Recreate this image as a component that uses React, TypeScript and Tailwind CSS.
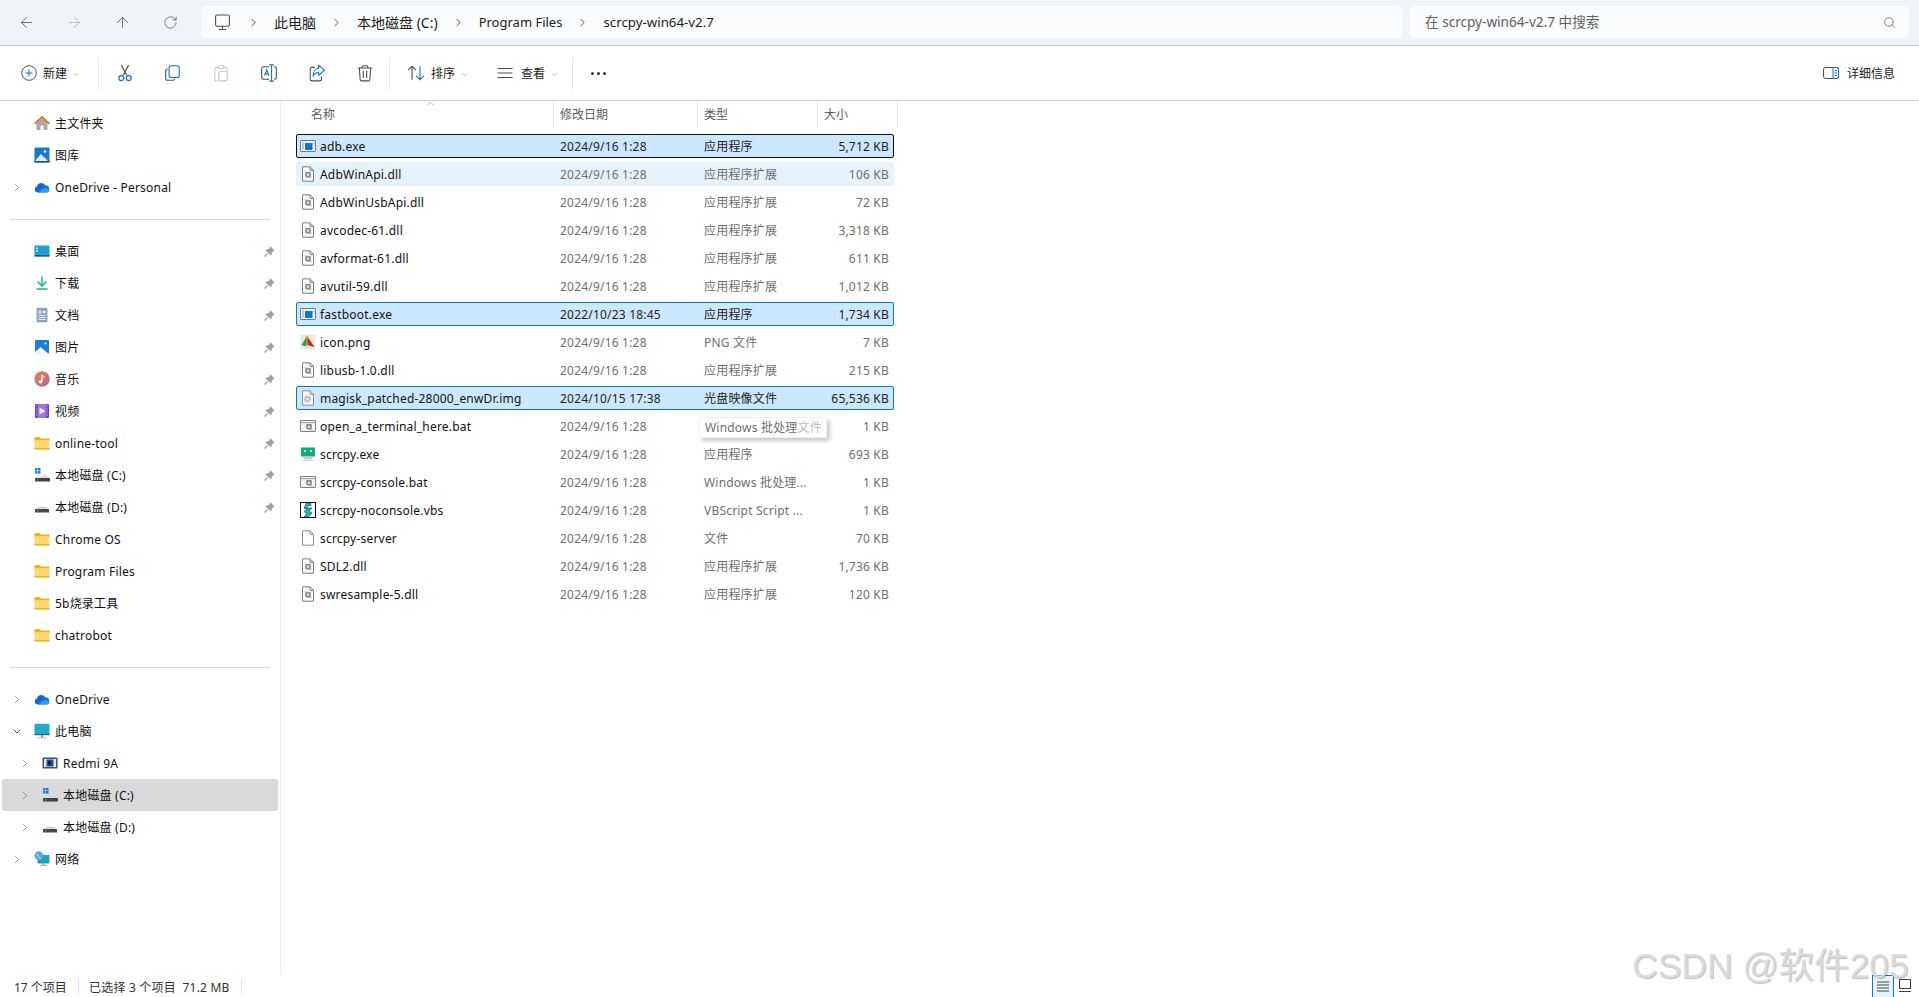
import React from "react";
import { ArrowLeft, ArrowRight, ArrowUp, RotateCw, ChevronRight, ChevronDown, ChevronUp, Search } from "lucide-react";

const Svg = ({ children, size = 16, className = "" }: { children: React.ReactNode; size?: number; className?: string }) => (
  <svg width={size} height={size} viewBox="0 0 16 16" fill="none" className={`shrink-0 ${className}`}>{children}</svg>
);

const Home = () => (
  <Svg>
    <path d="M2.500 7.500v7.500h4V10.500h3V15h4V7.500L8 3z" fill="#a8a8a8" />
    <path d="M0 8.300 8 .8l8 7.500-1.100 1.100L8 3.100 1.100 9.400z" fill="#dd7412" />
  </Svg>
);
const Gallery = () => (
  <Svg>
    <rect x="0.500" y="0.500" width="15" height="15" rx="1" fill="#1a78c8" />
    <rect x="0.500" y="13" width="15" height="2.500" fill="#0f5a9c" />
    <path d="M1 14 7 7l7 7z" fill="#dfeaf4" />
    <circle cx="11" cy="4.500" r="1.200" fill="#fff" />
  </Svg>
);
const Cloud = () => (
  <Svg>
    <path d="M3.500 13.500A3 3 0 0 1 3 7.600 4.400 4.400 0 0 1 11.400 6.600 3.500 3.500 0 0 1 12.500 13.500z" fill="#0f6cc8" />
    <path d="M4 13.500 9 9.300l3-.6 3.600 2.600a2.600 2.600 0 0 1-2.600 2.200z" fill="#2ba0ea" />
  </Svg>
);
const Desktop = () => (
  <Svg>
    <rect x="0.500" y="2.500" width="15" height="11" rx="1" fill="#1c9fd0" />
    <rect x="0.500" y="12" width="15" height="1.500" fill="#0d5f96" />
    <rect x="2" y="4.500" width="2" height="1.500" fill="#e8f6fc" />
    <rect x="2" y="7" width="2" height="1.500" fill="#e8f6fc" />
  </Svg>
);
const Download = () => (
  <Svg>
    <path d="M8 1.500v9M3.600 6.600 8 11l4.400-4.400" stroke="#2fb58f" strokeWidth="1.600" />
    <rect x="2.500" y="13.200" width="11" height="1.600" fill="#2fb58f" />
  </Svg>
);
const Docs = () => (
  <Svg>
    <rect x="2.500" y="0.800" width="11" height="14.400" rx="1" fill="#8ea6c3" />
    <path d="M4.500 4h3M4.500 6h3" stroke="#fff" />
    <path d="M9 4h2.500v2H9z" fill="#fff" />
    <path d="M4.500 8.500h7M4.500 10.500h7M4.500 12.500h7" stroke="#e4ebf3" />
  </Svg>
);
const Pictures = () => (
  <Svg>
    <rect x="1" y="1" width="14" height="14" rx="1" fill="#1a7fd4" />
    <path d="M1 15V13l5.500-5 8.500 7z" fill="#e9f3fb" />
    <circle cx="11.500" cy="4.500" r="1" fill="#fff" />
  </Svg>
);
const Music = () => (
  <Svg>
    <defs>
      <linearGradient id="mg" x1="0" y1="0" x2="1" y2="1">
        <stop offset="0" stopColor="#ea8a3c" />
        <stop offset="1" stopColor="#b25fa8" />
      </linearGradient>
    </defs>
    <circle cx="8" cy="8" r="7.700" fill="url(#mg)" />
    <path d="M8 4v6.500" stroke="#fff" strokeWidth="1.300" />
    <path d="M8 4c1 1.500 2.500 1 2.500 2.500" stroke="#fff" />
    <circle cx="6.500" cy="10.800" r="1.700" fill="#fff" />
  </Svg>
);
const Video = () => (
  <Svg>
    <rect x="1" y="1" width="14" height="14" rx="1" fill="#6d3fc4" />
    <rect x="3.500" y="1" width="9" height="14" fill="#9c75e4" />
    <path d="M5.500 4.500v7l6-3.500z" fill="#f3eefc" />
    <path d="M2 3h.8M2 6h.8M2 9h.8M2 12h.8M13.200 3h.8M13.200 6h.8M13.200 9h.8M13.200 12h.8" stroke="#d8c8f4" strokeWidth="1.200" />
  </Svg>
);
const Folder = () => (
  <Svg>
    <path d="M0.500 3a1 1 0 0 1 1-1h4l1.500 1.500h7.500a1 1 0 0 1 1 1V6H.5z" fill="#eeb01b" />
    <path d="M0.500 5h15v8.500a1 1 0 0 1-1 1h-13a1 1 0 0 1-1-1z" fill="#fbd96e" />
    <path d="M0.500 13h15v.5a1 1 0 0 1-1 1h-13a1 1 0 0 1-1-1z" fill="#eeb01b" />
  </Svg>
);
const DriveC = () => (
  <Svg>
    <path d="M1 1h2.500v2.500H1zM4 1h2.500v2.500H4zM1 4h2.500v2.500H1zM4 4h2.500v2.500H4z" fill="#0a84dc" />
    <path d="M3 9.500h6.500l1.500-3 4 5H1z" fill="#d8dde2" />
    <rect x="1" y="11" width="15" height="3.500" rx=".5" fill="#3f4347" />
    <rect x="3" y="12.300" width="1.500" height="1" fill="#4ce06a" />
  </Svg>
);
const DriveD = () => (
  <Svg>
    <path d="M1.500 10.500C2.500 6.500 13.500 6.500 14.500 10.500z" fill="#d5d8dc" />
    <rect x="1" y="10" width="14" height="3.500" rx=".5" fill="#43474b" />
    <rect x="3" y="11.300" width="1.500" height="1" fill="#4ce06a" />
  </Svg>
);
const Pc = () => (
  <Svg>
    <rect x="0.500" y="0.800" width="15" height="11.200" rx="1" fill="#23aac7" />
    <rect x="0.500" y="11" width="15" height="1.200" fill="#0d7089" />
    <rect x="7" y="12" width="2" height="2.500" fill="#8a9aa3" />
    <rect x="4" y="14.300" width="8" height="1" fill="#aab6bc" />
  </Svg>
);
const Phone = () => (
  <Svg>
    <rect x="0.500" y="2.500" width="15" height="11" rx="1" fill="#4a4f55" />
    <rect x="2" y="4" width="12" height="8" fill="#e4e7ea" />
    <rect x="4.500" y="4.500" width="7" height="7" fill="#1d4fb0" />
    <rect x="6" y="6" width="3" height="4" fill="#0c1e4a" />
  </Svg>
);
const Network = () => (
  <Svg>
    <rect x="3.500" y="4" width="12" height="8.500" rx=".8" fill="#22a3c4" />
    <rect x="8.500" y="12.500" width="2" height="1.500" fill="#8a9aa3" />
    <rect x="6" y="14" width="7" height="1" fill="#aab6bc" />
    <circle cx="4.800" cy="4.500" r="4.300" fill="#5aa6e0" />
    <path d="M2 3c1.500.5 2 1 2.500 2.500S6 7 7 7.500" stroke="#cfe8f8" />
  </Svg>
);

const Pin = () => (
  <svg width="11" height="11" viewBox="0 0 11 11" className="shrink-0">
    <path d="M6.500.5 10.500 4.500 9.500 5 7.800 6.500 7.500 9 6.800 9.500 1.500 4.200 2 3.500 4.500 3.200 6 1.500z" fill="#98a0a8" />
    <path d="M3.500 7.500.5 10.500" stroke="#98a0a8" strokeWidth="1.200" />
  </svg>
);

const ExeIcon = () => (
  <Svg>
    <rect x="0.500" y="2.500" width="15" height="11" rx=".6" fill="#f4f6f8" stroke="#6f7a84" />
    <rect x="5" y="5" width="7.500" height="7" fill="#0b78d0" />
    <path d="M2 5h2M2 7h2M2 9h2M2 11h2M13 5h1.500" stroke="#8a96a2" />
  </Svg>
);
const Gear = ({ x = 8, y = 8.700 }: { x?: number; y?: number }) => (
  <g>
    <circle cx={x} cy={y} r="3" fill="#8a929a" />
    <circle cx={x} cy={y} r="1.100" fill="#f2f3f4" />
    <path d={`M${x - 3.300} ${y - 3.300}l1.800 1.800M${x + 3.300} ${y + 3.300}l-1.800-1.800M${x + 3} ${y - 3}l-1.300 1.300`} stroke="#7f8891" />
  </g>
);
const DllIcon = () => (
  <Svg>
    <path d="M2.500.8h7.500l3.500 3.500v10.900h-11z" fill="#fafafa" stroke="#7c7f83" />
    <path d="M10 .8v3.500h3.500" stroke="#7c7f83" />
    <Gear />
  </Svg>
);
const PngIcon = () => (
  <Svg>
    <rect x="0.500" y="0.500" width="15" height="15" rx="1.500" fill="#e8e8e8" />
    <path d="M7 2 1.500 11l5 1.500z" fill="#2f9e35" />
    <path d="M7 2 14.500 13l-7-2z" fill="#c9261a" />
    <path d="M5.500 3 7.500 2 9 4.500 6 6z" fill="#ee8a1c" />
  </Svg>
);
const ImgIcon = () => (
  <Svg>
    <path d="M2.500.8h7.500l3.500 3.500v10.900h-11z" fill="#fafafa" stroke="#8c8f93" />
    <path d="M10 .8v3.500h3.500" stroke="#8c8f93" />
    <circle cx="7.500" cy="9" r="3.500" fill="#c4c7ca" />
    <circle cx="7.500" cy="9" r="1" fill="#eef0f2" />
  </Svg>
);
const BatIcon = () => (
  <Svg>
    <rect x="0.500" y="2.500" width="15" height="11" rx=".5" fill="#f4f4f4" stroke="#7c7f83" />
    <path d="M1 4.500h14" stroke="#a0a3a6" />
    <Gear x={9} y={8.800} />
  </Svg>
);
const ScrcpyIcon = () => (
  <Svg>
    <rect x="1" y="1.500" width="14" height="9" fill="#13a97a" />
    <circle cx="5" cy="5" r=".9" fill="#fff" />
    <circle cx="11" cy="5" r=".9" fill="#fff" />
    <path d="M4 10.500h8v3H4z" fill="#c8cdd0" />
    <path d="M2 14h12v1H2z" fill="#dde0e2" />
  </Svg>
);
const VbsIcon = () => (
  <Svg>
    <rect x="0.500" y="0.500" width="15" height="15" fill="#fff" stroke="#111" />
    <path d="M6 1.500h5v2H8L7 6h5L9 9l3 2-3 3.500H4l3-3-3-2 3-3H4z" fill="#14b4c4" stroke="#0a2840" strokeWidth=".5" />
  </Svg>
);
const BlankIcon = () => (
  <Svg>
    <path d="M2.500.8h7.500l3.500 3.500v10.900h-11z" fill="#fdfdfd" stroke="#8c8f93" />
    <path d="M10 .8v3.500h3.500" stroke="#8c8f93" />
  </Svg>
);

const CutI = () => (
  <Svg size={18}>
    <path d="M4.800 1 9.500 10M11.200 1 6.500 10" stroke="#4c4c4c" />
    <circle cx="4.700" cy="12.500" r="2.200" stroke="#0a74c9" strokeWidth="1.100" />
    <circle cx="11.300" cy="12.500" r="2.200" stroke="#0a74c9" strokeWidth="1.100" />
  </Svg>
);
const CopyI = () => (
  <Svg size={18}>
    <path d="M3.500 4.500h-.5a1.500 1.500 0 0 0-1.500 1.500v7a1.500 1.500 0 0 0 1.500 1.500h5A1.500 1.500 0 0 0 9.500 13.500" stroke="#4c4c4c" strokeWidth=".95" />
    <rect x="4.500" y="1.500" width="9" height="10.500" rx="1.800" stroke="#0a74c9" strokeWidth=".95" />
  </Svg>
);
const PasteI = () => (
  <Svg size={18}>
    <path d="M5 3H4a1.500 1.500 0 0 0-1.500 1.500v9A1.500 1.500 0 0 0 4 15h1M11 3h1a1.500 1.500 0 0 1 1.500 1.500V6" stroke="#c8c8c8" strokeWidth=".95" />
    <rect x="5.500" y="1.500" width="5" height="2.500" rx=".8" stroke="#c8c8c8" strokeWidth=".95" />
    <rect x="6" y="6.500" width="7.500" height="8.500" rx="1.500" stroke="#a9cdea" strokeWidth=".95" />
  </Svg>
);
const RenameI = () => (
  <Svg size={18}>
    <path d="M8 2.500H3a1.500 1.500 0 0 0-1.500 1.500v8A1.500 1.500 0 0 0 3 13.500h5M12.500 2.500h.5A1.500 1.500 0 0 1 14.500 4v8a1.500 1.500 0 0 1-1.500 1.500h-.5" stroke="#4c4c4c" strokeWidth=".95" />
    <path d="M8.300.8h4M8.300 15.200h4M10.300.8v14.400" stroke="#0a74c9" strokeWidth=".95" />
    <path d="M4 10.500 6 5l2 5.500M4.700 8.800h2.600" stroke="#0a74c9" strokeWidth=".95" />
  </Svg>
);
const ShareI = () => (
  <Svg size={18}>
    <path d="M6 3H3.500A1.500 1.500 0 0 0 2 4.500v9A1.500 1.500 0 0 0 3.500 15h7a1.500 1.500 0 0 0 1.500-1.500V11" stroke="#4c4c4c" strokeWidth=".95" />
    <path d="M9.500 1 14.700 5.500 9.500 10V7.500C7 7.500 5.500 8.500 4.500 11 4.500 7 6.500 4 9.500 3.800z" stroke="#0a74c9" strokeWidth=".95" strokeLinejoin="round" />
  </Svg>
);
const TrashI = () => (
  <Svg size={18}>
    <path d="M1.500 3.500h13M5.500 3.500v-1a1 1 0 0 1 1-1h3a1 1 0 0 1 1 1v1M3 3.500l.7 10.500a1.200 1.200 0 0 0 1.200 1h6.200a1.200 1.200 0 0 0 1.200-1L13 3.500M6.500 6v6.500M9.500 6v6.500" stroke="#4c4c4c" strokeWidth=".95" />
  </Svg>
);
const SortI = () => (
  <Svg size={18}>
    <path d="M4.500 14V2M1 5.500 4.500 2 8 5.500" stroke="#4c4c4c" strokeWidth=".95" />
    <path d="M11.500 2v12M8 10.500 11.500 14 15 10.500" stroke="#0a74c9" strokeWidth=".95" />
  </Svg>
);
const ViewI = () => (
  <Svg size={16}>
    <path d="M.5 3.500h15M.5 8h15M.5 12.500h15" stroke="#4c4c4c" strokeWidth="1" />
  </Svg>
);
const NewI = () => (
  <Svg size={16}>
    <circle cx="8" cy="8" r="7.300" stroke="#4c4c4c" strokeWidth=".95" />
    <path d="M8 4.500v7M4.500 8h7" stroke="#0a74c9" strokeWidth="1" />
  </Svg>
);
const DetailsI = () => (
  <Svg size={16}>
    <rect x=".5" y="2.500" width="15" height="11" rx="2" stroke="#4c4c4c" />
    <path d="M10 2.500v11" stroke="#0a74c9" />
    <path d="M10 2.500h3.500a2 2 0 0 1 2 2v7a2 2 0 0 1-2 2H10" stroke="#0a74c9" />
    <path d="M11.500 5.500h2.500M11.500 8h2.500M11.500 10.500h2.500" stroke="#0a74c9" />
  </Svg>
);
const PcLine = () => (
  <Svg size={17}>
    <rect x="1.500" y="1" width="13" height="10.500" rx="1.500" stroke="#4c4c4c" />
    <path d="M8 11.500v3M4.500 14.500h7" stroke="#4c4c4c" />
  </Svg>
);
const Caret = () => <ChevronDown size={9} strokeWidth={1.300} className="text-[#8a8a8a] shrink-0" />;

const ToolBtn = ({ children, w }: { children: React.ReactNode; w: string }) => (
  <div className={`flex items-center justify-center h-8 ${w}`}>{children}</div>
);
const Sep = () => <div className="w-px h-8 bg-[#e6e6e6] shrink-0" />;
const Crumb = ({ t, size }: { t: string; size: string }) => (
  <>
    <ChevronRight size={13} strokeWidth={1.500} className="text-[#3c3c3c] mx-[14px] shrink-0" />
    <span className={`pt-[1px] text-[#1c1c1c] whitespace-nowrap ${size}`}>{t}</span>
  </>
);

type Nav = { t: string; i: React.ReactNode; chev?: "r" | "d"; pin?: boolean; lvl?: number; sel?: boolean };
const NavRow = ({ t, i, chev, pin, lvl = 0, sel }: Nav) => (
  <div className={`flex items-center h-8 ml-[2px] w-[276px] rounded-[3px] ${sel ? "bg-[#d9d9d9]" : ""}`}>
    <div className={`flex items-center justify-center w-[12px] shrink-0 ${lvl ? "ml-[17px]" : "ml-[9px]"}`}>
      {chev === "r" && <ChevronRight size={13} strokeWidth={1.500} className="text-[#7a7a7a]" />}
      {chev === "d" && <ChevronDown size={13} strokeWidth={1.700} className="text-[#3c3c3c]" />}
    </div>
    <div className="ml-[11px] shrink-0"><div>{i}</div></div>
    <span className="ml-[5px] pt-[1px] text-[12px] tracking-[0.2px] text-[#111] whitespace-nowrap">{t}</span>
    {pin && <div className="ml-auto mr-[3px]"><Pin /></div>}
  </div>
);

type FileRow = { n: string; d: string; ty: string; s: string; i: React.ReactNode; st?: "focus" | "sel" | "hover" };
const D = "2024/9/16 1:28";
const DT = "应用程序扩展";
const files: FileRow[] = [
  { n: "adb.exe", d: D, ty: "应用程序", s: "5,712 KB", i: <ExeIcon />, st: "focus" },
  { n: "AdbWinApi.dll", d: D, ty: DT, s: "106 KB", i: <DllIcon />, st: "hover" },
  { n: "AdbWinUsbApi.dll", d: D, ty: DT, s: "72 KB", i: <DllIcon /> },
  { n: "avcodec-61.dll", d: D, ty: DT, s: "3,318 KB", i: <DllIcon /> },
  { n: "avformat-61.dll", d: D, ty: DT, s: "611 KB", i: <DllIcon /> },
  { n: "avutil-59.dll", d: D, ty: DT, s: "1,012 KB", i: <DllIcon /> },
  { n: "fastboot.exe", d: "2022/10/23 18:45", ty: "应用程序", s: "1,734 KB", i: <ExeIcon />, st: "sel" },
  { n: "icon.png", d: D, ty: "PNG 文件", s: "7 KB", i: <PngIcon /> },
  { n: "libusb-1.0.dll", d: D, ty: DT, s: "215 KB", i: <DllIcon /> },
  { n: "magisk_patched-28000_enwDr.img", d: "2024/10/15 17:38", ty: "光盘映像文件", s: "65,536 KB", i: <ImgIcon />, st: "sel" },
  { n: "open_a_terminal_here.bat", d: D, ty: "", s: "1 KB", i: <BatIcon /> },
  { n: "scrcpy.exe", d: D, ty: "应用程序", s: "693 KB", i: <ScrcpyIcon /> },
  { n: "scrcpy-console.bat", d: D, ty: "Windows 批处理...", s: "1 KB", i: <BatIcon /> },
  { n: "scrcpy-noconsole.vbs", d: D, ty: "VBScript Script ...", s: "1 KB", i: <VbsIcon /> },
  { n: "scrcpy-server", d: D, ty: "文件", s: "70 KB", i: <BlankIcon /> },
  { n: "SDL2.dll", d: D, ty: DT, s: "1,736 KB", i: <DllIcon /> },
  { n: "swresample-5.dll", d: D, ty: DT, s: "120 KB", i: <DllIcon /> },
];

const Row = ({ f }: { f: FileRow }) => {
  const box =
    f.st === "focus"
      ? "bg-[#cce8ff] border-[#111111]"
      : f.st === "sel"
        ? "bg-[#cce8ff] border-[#0a78d0]"
        : f.st === "hover"
          ? "bg-[#e5f3ff] border-transparent"
          : "border-transparent";
  const meta = f.st === "focus" || f.st === "sel" ? "text-[#222]" : "text-[#6f6f6f]";
  return (
    <div className={`flex items-center h-6 mb-1 border rounded-[2px] text-[12px] tracking-[0.2px] ${box}`}>
      <div className="ml-[3px]"><div>{f.i}</div></div>
      <span className="ml-[4px] pt-[1px] w-[240px] text-[#111] whitespace-nowrap">{f.n}</span>
      <span className={`w-[144px] pt-[1px] whitespace-nowrap ${meta}`}>{f.d}</span>
      <span className={`w-[110px] pt-[1px] whitespace-nowrap ${meta}`}>{f.ty}</span>
      <span className={`flex-1 pt-[1px] text-right pr-[4px] whitespace-nowrap ${meta}`}>{f.s}</span>
    </div>
  );
};

const Head = ({ t, w, pl }: { t: string; w: string; pl: string }) => (
  <div className={`h-[27px] pt-[1px] flex items-center border-r border-[#e5e5e5] text-[12px] text-[#5c5c5c] ${w} ${pl}`}>{t}</div>
);

const Divider = () => <div className="h-px bg-[#d6d6d6] ml-[10px] w-[260px] mt-[16px] mb-[15px]" />;

export default function App() {
  return (
    <div className="relative w-[1919px] h-[997px] overflow-hidden bg-white flex flex-col [font-family:'Noto_Sans','Noto_Sans_CJK_SC',sans-serif]">
      {/* address row */}
      <div className="h-[46px] shrink-0 bg-[#eff4f9] border-b border-[#bfcfdf] flex items-center pb-[1px]">
        <div className="flex items-center w-[201px] shrink-0 pl-[18px] gap-[31px]">
          <ArrowLeft size={17} strokeWidth={1} className="text-[#3c3c3c]" />
          <ArrowRight size={17} strokeWidth={1} className="text-[#a8a8a8]" />
          <ArrowUp size={17} strokeWidth={1} className="text-[#3c3c3c]" />
          <RotateCw size={15} strokeWidth={1} className="text-[#3c3c3c] ml-[1px]" />
        </div>
        <div className="w-[1201px] h-8 rounded-[5px] bg-[#fbfcfe] flex items-center pl-[13px]">
          <div className="mr-[2px]"><PcLine /></div>
          <Crumb t="此电脑" size="text-[14px]" />
          <Crumb t="本地磁盘 (C:)" size="text-[14px]" />
          <Crumb t="Program Files" size="text-[13px]" />
          <Crumb t="scrcpy-win64-v2.7" size="text-[13.300px]" />
        </div>
        <div className="ml-[8px] w-[499px] h-8 rounded-[5px] bg-[#fbfcfe] flex items-center pl-[15px] pr-[13px]">
          <span className="pt-[1px] text-[13.600px] text-[#5f5f5f] whitespace-nowrap">在 scrcpy-win64-v2.7 中搜索</span>
          <Search size={13} strokeWidth={1.200} className="ml-auto text-[#4c4c4c]" />
        </div>
      </div>

      {/* toolbar */}
      <div className="h-[55px] shrink-0 bg-white border-b border-[#c3d3e2] flex items-center pr-[24px]">
        <div className="flex items-center w-[98px] shrink-0 pl-[21px]">
          <NewI />
          <span className="ml-[6px] pt-[2px] text-[12px] text-[#222]">新建</span>
          <div className="ml-[5px] pt-[2px]"><Caret /></div>
        </div>
        <Sep />
        <div className="flex items-center pl-[2px]">
          <ToolBtn w="w-[48px]"><CutI /></ToolBtn>
          <ToolBtn w="w-[48px]"><CopyI /></ToolBtn>
          <ToolBtn w="w-[48px]"><PasteI /></ToolBtn>
          <ToolBtn w="w-[48px]"><RenameI /></ToolBtn>
          <ToolBtn w="w-[48px]"><ShareI /></ToolBtn>
          <ToolBtn w="w-[48px]"><TrashI /></ToolBtn>
        </div>
        <Sep />
        <div className="flex items-center w-[182px] shrink-0 pl-[17px]">
          <SortI />
          <span className="ml-[6px] pt-[2px] text-[12px] text-[#222]">排序</span>
          <div className="ml-[5px] pt-[2px]"><Caret /></div>
          <div className="ml-[28px]"><ViewI /></div>
          <span className="ml-[8px] pt-[2px] text-[12px] text-[#222]">查看</span>
          <div className="ml-[5px] pt-[2px]"><Caret /></div>
        </div>
        <Sep />
        <div className="ml-[18px] flex gap-[3px]">
          <i className="w-[3px] h-[3px] rounded-full bg-[#333]" />
          <i className="w-[3px] h-[3px] rounded-full bg-[#333]" />
          <i className="w-[3px] h-[3px] rounded-full bg-[#333]" />
        </div>
        <div className="ml-auto flex items-center">
          <DetailsI />
          <span className="ml-[8px] pt-[2px] text-[12px] text-[#222]">详细信息</span>
        </div>
      </div>

      {/* body */}
      <div className="flex flex-1 min-h-0">
        <aside className="w-[281px] shrink-0 border-r border-[#f0f0f0] pt-[6px]">
          <NavRow t="主文件夹" i={<Home />} />
          <NavRow t="图库" i={<Gallery />} />
          <NavRow t="OneDrive - Personal" i={<Cloud />} chev="r" />
          <Divider />
          <NavRow t="桌面" i={<Desktop />} pin />
          <NavRow t="下载" i={<Download />} pin />
          <NavRow t="文档" i={<Docs />} pin />
          <NavRow t="图片" i={<Pictures />} pin />
          <NavRow t="音乐" i={<Music />} pin />
          <NavRow t="视频" i={<Video />} pin />
          <NavRow t="online-tool" i={<Folder />} pin />
          <NavRow t="本地磁盘 (C:)" i={<DriveC />} pin />
          <NavRow t="本地磁盘 (D:)" i={<DriveD />} pin />
          <NavRow t="Chrome OS" i={<Folder />} />
          <NavRow t="Program Files" i={<Folder />} />
          <NavRow t="5b烧录工具" i={<Folder />} />
          <NavRow t="chatrobot" i={<Folder />} />
          <Divider />
          <NavRow t="OneDrive" i={<Cloud />} chev="r" />
          <NavRow t="此电脑" i={<Pc />} chev="d" />
          <NavRow t="Redmi 9A" i={<Phone />} chev="r" lvl={1} />
          <NavRow t="本地磁盘 (C:)" i={<DriveC />} chev="r" lvl={1} sel />
          <NavRow t="本地磁盘 (D:)" i={<DriveD />} chev="r" lvl={1} />
          <NavRow t="网络" i={<Network />} chev="r" />
        </aside>
        <main className="relative flex-1 min-w-0">
          <div className="flex w-[617px]">
            <Head t="名称" w="w-[273px]" pl="pl-[30px]" />
            <Head t="修改日期" w="w-[144px]" pl="pl-[6px]" />
            <Head t="类型" w="w-[120px]" pl="pl-[6px]" />
            <Head t="大小" w="w-[80px]" pl="pl-[6px]" />
          </div>
          <ChevronUp size={11} strokeWidth={1.200} className="absolute left-[144px] top-[-3px] text-[#6a6a6a]" />
          <div className="ml-[15px] w-[598px] pt-[6px]">
            {files.map((f) => (
              <Row key={f.n} f={f} />
            ))}
          </div>
          {/* tooltip */}
          <div className="absolute left-[418px] top-[316px] w-[128px] h-[21px] rounded-[3px] bg-[#ffffffee] border border-[#f0f0f0] shadow-[3px_3px_4px_rgba(0,0,0,0.22)] flex items-center pl-[5px] text-[12px] tracking-[0.2px] whitespace-nowrap text-[#6f6f6f]">
            Windows 批处理<span className="text-[#bdbdbd]">文件</span>
          </div>
        </main>
      </div>

      {/* status bar */}
      <div className="h-[22px] shrink-0 bg-white flex items-center text-[12px] text-[#333] relative">
        <span className="ml-[14px] pt-[3px] w-[64px] whitespace-nowrap">17 个项目</span>
        <div className="w-px h-4 bg-[#e5e5e5]" />
        <span className="ml-[10px] pt-[3px] w-[152px] tracking-[0.2px] whitespace-nowrap">已选择 3 个项目&nbsp;&nbsp;71.2 MB</span>
        <div className="w-px h-4 bg-[#e5e5e5]" />
        <div className="ml-auto flex items-center mr-[8px]">
          <div className="w-[22px] h-[22px] border border-[#0a78d0] border-b-0 bg-[#e5f3fb] flex items-center justify-center">
            <svg width="14" height="11" viewBox="0 0 14 11"><path d="M1 1h12M1 4h12M1 7h12M1 10h12" stroke="#444" /></svg>
          </div>
          <div className="ml-[5px]">
            <svg width="12" height="14" viewBox="0 0 12 14" fill="none"><rect x=".5" y=".5" width="11" height="9" stroke="#444" /><path d="M0 12.500h12" stroke="#444" /></svg>
          </div>
        </div>
      </div>

      {/* watermark */}
      <div className="absolute left-[1632px] top-[941px] text-[35.500px] leading-[50px] whitespace-nowrap text-[#dcdcdc]/90 [text-shadow:1px_1px_1px_rgba(0,0,0,0.25)] [font-family:'Liberation_Sans','Noto_Sans_CJK_SC',sans-serif]">
        CSDN @软件205
      </div>
    </div>
  );
}
